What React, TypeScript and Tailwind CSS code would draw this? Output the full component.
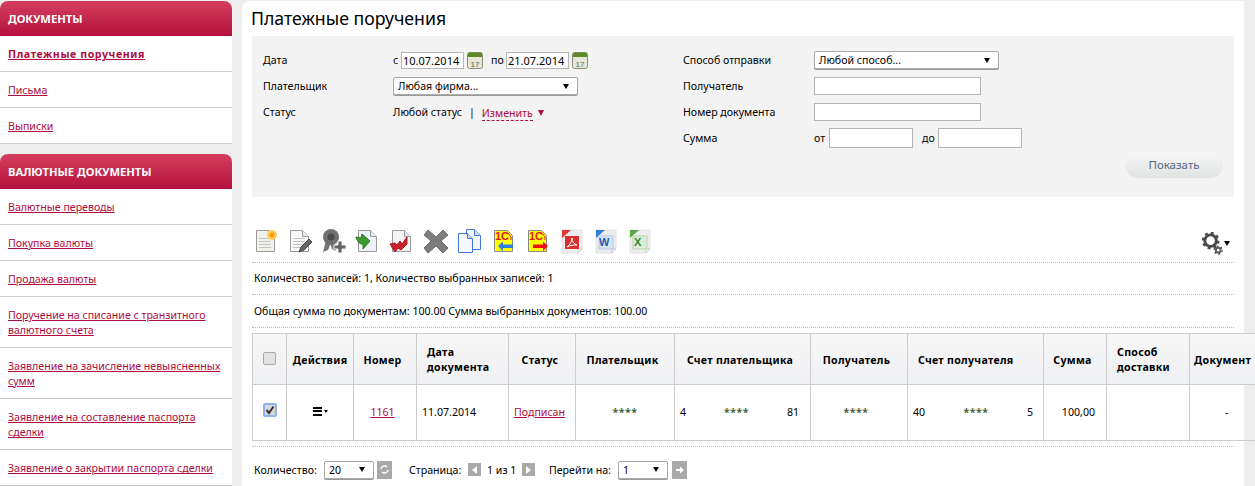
import React from 'react';

const FONT = "font-['Noto_Sans','Liberation_Sans',sans-serif]";

const Page: React.FC<{ fill?: string; stroke?: string; children?: React.ReactNode }> = ({
  fill = '#f7f8fb',
  stroke = '#9a9a9a',
  children,
}) => (
  <svg width="26" height="26" viewBox="0 0 26 26" className="block">
    <path d="M3.5 2.5h12l6 6v15h-18z" fill={fill} stroke={stroke} />
    <path d="M15.5 2.5v6h6" fill="#e4e8f0" stroke={stroke} />
    {children}
  </svg>
);

const TextLines = () => (
  <g stroke="#c4c4c4">
    <path d="M6 10.5h12M6 13.5h12M6 16.5h12M6 19.5h12" />
  </g>
);

const OneC: React.FC<{ arrow: 'left' | 'right' }> = ({ arrow }) => (
  <svg width="26" height="26" viewBox="0 0 26 26" className="block">
    <path d="M3.5 2.5h13l5 5v16h-18z" fill="#ffff00" stroke="#8a8a8a" />
    <text x="4" y="12" fontSize="11" fontWeight="700" fill="#e02020" fontFamily="Liberation Sans">
      1С
    </text>
    <path d="M15 5h2l3 4v3" stroke="#e02020" fill="none" />
    {arrow === 'left' ? (
      <path d="M7 18l5-4.500v3h10v3.500h-10v3z" fill="#2b7de0" />
    ) : (
      <path d="M23 18l-5-4.500v3h-10v3.500h10v3z" fill="#ee1111" />
    )}
  </svg>
);

const OfficeDoc: React.FC<{ corner: string; children: React.ReactNode }> = ({ corner, children }) => (
  <svg width="26" height="26" viewBox="0 0 26 26" className="block">
    <path d="M3 2h20v19l-4 4H3z" fill="#ededf0" stroke="#e2e2e2" />
    <path d="M23 21h-4v4z" fill="#ffffff" stroke="#cccccc" />
    <path d="M3 2h9L3 10z" fill={corner} />
    {children}
  </svg>
);

const toolbarIcons: React.ReactNode[] = [
  <Page key="new" fill="#f1f1ec">
    <TextLines />
    <circle cx="19" cy="7" r="5" fill="#ffcc55" />
    <circle cx="19" cy="7" r="2.500" fill="#f59a1c" />
  </Page>,
  <Page key="edit" fill="#f8f8f8">
    <TextLines />
    <path d="M12 24l2-5 8-8 3 3-8 8z" fill="#666666" stroke="#444444" />
  </Page>,
  <svg key="cert" width="26" height="26" viewBox="0 0 26 26" className="block">
    <path d="M5 12l-3 12 5-2 3-7zM13 13l2 10-4-2-2-6z" fill="#777777" />
    <circle cx="10" cy="9" r="8" fill="#707070" />
    <circle cx="10" cy="9" r="3.500" fill="#4c4c4c" />
    <path d="M17 13h4v4h4v4h-4v4h-4v-4h-4v-4h4z" fill="#666666" stroke="#f4f4f4" />
  </svg>,
  <Page key="in" fill="#eef2fa">
    <path d="M1 9l5 1 1-4 8 7-7 8v-5c-3 0-5-1-7-7z" fill="#3c9a2c" stroke="#2c7a1e" />
  </Page>,
  <Page key="out" fill="#f5f5f8">
    <path d="M1 16l5-1 2 2 3-4 2 3 5-7v7l-6 6-3-2-3 4z" fill="#c9202a" stroke="#a81820" />
  </Page>,
  <svg key="del" width="26" height="26" viewBox="0 0 26 26" className="block">
    <path
      d="M5 2l8 7 7-7 5 5-7 6 7 7-5 5-7-7-8 7-4-5 7-7-7-6z"
      fill="#7d7d7d"
      stroke="#6a6a6a"
    />
  </svg>,
  <svg key="copy" width="26" height="26" viewBox="0 0 26 26" className="block">
    <path d="M9.500 1.500h8l6 6v14h-14z" fill="#f2f5ff" stroke="#3f78e0" />
    <path d="M17.500 1.500v6h6" fill="#cfdcf8" stroke="#3f78e0" />
    <path d="M1.500 5.500h9l5 5v14h-14z" fill="#f7f9ff" stroke="#3f78e0" />
    <path d="M10.500 5.500v5h5" fill="#cfdcf8" stroke="#3f78e0" />
  </svg>,
  <OneC key="1c-in" arrow="left" />,
  <OneC key="1c-out" arrow="right" />,
  <OfficeDoc key="pdf" corner="#e03535">
    <rect x="6" y="8" width="14" height="13" fill="#d92f2f" />
    <path d="M8 19c3-2 5-6 5-9 0 4 2 6 5 7-3 0-7 0-10 2z" fill="none" stroke="#ffffff" />
  </OfficeDoc>,
  <OfficeDoc key="word" corner="#2f7fd6">
    <rect x="6" y="8" width="14" height="13" fill="#dbe6f5" stroke="#b4c8e4" />
    <text x="6" y="18" fontSize="11" fontWeight="700" fill="#1f57b0" fontFamily="Liberation Sans">
      W
    </text>
  </OfficeDoc>,
  <OfficeDoc key="excel" corner="#58a845">
    <rect x="6" y="8" width="14" height="13" fill="#dcebd6" stroke="#b7d3ac" />
    <text x="7" y="18" fontSize="11" fontWeight="700" fill="#2f8a3a" fontFamily="Liberation Sans">
      X
    </text>
  </OfficeDoc>,
];

const Calendar = () => (
  <svg width="16" height="17" viewBox="0 0 16 17" className="block">
    <rect x="0.500" y="0.500" width="15" height="16" rx="2" fill="#e6e7d6" stroke="#8a8f78" />
    <path d="M1 2.500a2 2 0 0 1 2-2h10a2 2 0 0 1 2 2V5H1z" fill="#5c8a28" />
    <text x="8" y="14.500" textAnchor="middle" fontSize="8" fill="#60645a" fontFamily="Liberation Sans">
      17
    </text>
  </svg>
);

const Gears = () => (
  <svg width="21" height="23" viewBox="0 0 22 24" className="block">
    <circle cx="9" cy="9" r="6" fill="none" stroke="#4a4a4a" strokeWidth="3" />
    <circle cx="9" cy="9" r="8" fill="none" stroke="#4a4a4a" strokeWidth="2.500" strokeDasharray="3 3.280" />
    <circle cx="17" cy="19" r="2.500" fill="none" stroke="#5a5a5a" strokeWidth="2" />
    <circle cx="17" cy="19" r="4.200" fill="none" stroke="#5a5a5a" strokeWidth="1.500" strokeDasharray="2 2.400" />
  </svg>
);

const Caret: React.FC<{ className?: string }> = ({ className = '' }) => (
  <span className={`inline-block w-0 h-0 border-x-[3.500px] border-x-transparent border-t-[5px] border-t-black ${className}`} />
);

const Select: React.FC<{ value: string; className: string }> = ({ value, className }) => (
  <div className={`flex items-center justify-between bg-white border border-[#aaaaaa] rounded-[2px] pl-1 pr-2 shadow-[0_1px_0_#999] ${className}`}>
    <span className="pt-[2px]">{value}</span>
    <Caret />
  </div>
);

const Box: React.FC<{ value?: string; className: string }> = ({ value = '', className }) => (
  <input
    readOnly
    value={value}
    className={`block bg-white border border-[#b5b5b5] px-px text-black text-[11px] leading-none outline-none ${className}`}
  />
);

const PagerBtn: React.FC<{ children: React.ReactNode; className?: string }> = ({ children, className = 'w-[14px] h-[14px]' }) => (
  <span className={`flex items-center justify-center bg-[#a9a9a9] text-white ${className}`}>{children}</span>
);

const Section: React.FC<{ title: string; items: string[]; active?: string }> = ({ title, items, active }) => (
  <section className="mb-[10px]">
    <h2 className="h-[35px] flex items-center px-2 pt-[2px] rounded-t-lg bg-gradient-to-b from-[#d53d5f] to-[#b30c3d] text-white font-bold text-[11.200px] uppercase">
      {title}
    </h2>
    <ul className="bg-white">
      {items.map((item) => (
        <li key={item} className="pl-2 pr-1 pt-[11px] pb-[9px] border-b border-[#cccccc] leading-[15px]">
          <a className={`text-[#b00b3c] underline ${item === active ? 'font-bold tracking-[0.6px]' : ''}`}>{item}</a>
        </li>
      ))}
    </ul>
  </section>
);

const FilterRow: React.FC<{ label: string; labelWidth: string; children: React.ReactNode }> = ({ label, labelWidth, children }) => (
  <div className="flex items-center h-[26px]">
    <span className={`${labelWidth} pt-[2px]`}>{label}</span>
    {children}
  </div>
);

const Stars = () => <span className="text-[#44663a] font-bold tracking-[0.5px]">****</span>;

const headers = [
  { title: 'Действия', w: 'w-[67px]', pad: 'text-center' },
  { title: 'Номер', w: 'w-[63px]', pad: 'text-center pr-[5px]' },
  { title: 'Дата документа', w: 'w-[92px]', pad: 'text-left pl-[10px]' },
  { title: 'Статус', w: 'w-[67px]', pad: 'text-center pr-[4px]' },
  { title: 'Плательщик', w: 'w-[99px]', pad: 'text-center pr-[5px]' },
  { title: 'Счет плательщика', w: 'w-[136px]', pad: 'text-center pr-[5px]' },
  { title: 'Получатель', w: 'w-[97px]', pad: 'text-center pr-[5px]' },
  { title: 'Счет получателя', w: 'w-[136px]', pad: 'text-left pl-[10px]' },
  { title: 'Сумма', w: 'w-[63px]', pad: 'text-center pr-[5px]' },
  { title: 'Способ доставки', w: 'w-[83px]', pad: 'text-left pl-[10px]' },
  { title: 'Документ', w: 'w-[70px]', pad: 'text-left pl-[4px]' },
];

export default function App() {
  return (
    <div className={`${FONT} w-[1255px] h-[486px] overflow-hidden bg-[#eeeeee] flex pt-px text-[10.600px] text-black`}>
      {/* Sidebar */}
      <aside className="w-[232px] shrink-0">
        <Section
          title="Документы"
          active="Платежные поручения"
          items={['Платежные поручения', 'Письма', 'Выписки']}
        />
        <Section
          title="Валютные документы"
          items={[
            'Валютные переводы',
            'Покупка валюты',
            'Продажа валюты',
            'Поручение на списание с транзитного валютного счета',
            'Заявление на зачисление невыясненных сумм',
            'Заявление на составление паспорта сделки',
            'Заявление о закрытии паспорта сделки',
          ]}
        />
      </aside>

      {/* Main */}
      <main className="ml-[10px] w-[1002px] shrink-0 bg-white rounded-tl-lg px-[10px]">
        <h1 className="h-[35px] flex items-center text-[17.700px] -ml-px">Платежные поручения</h1>

        <div className="bg-[#f3f3f3] h-[161px] pt-[11px] pl-[11px] pr-[11px] flex">
          <div className="w-[420px]">
            <FilterRow label="Дата" labelWidth="w-[130px]">
              <span className="w-[8px] pt-[2px]">с</span>
              <Box value="10.07.2014" className="w-[63px] h-[17px]" />
              <span className="ml-[3px]"><Calendar /></span>
              <span className="ml-[8px] w-[15px] pt-[2px]">по</span>
              <Box value="21.07.2014" className="w-[63px] h-[17px]" />
              <span className="ml-[3px]"><Calendar /></span>
            </FilterRow>
            <FilterRow label="Плательщик" labelWidth="w-[130px]">
              <Select value="Любая фирма..." className="w-[185px] h-[18px]" />
            </FilterRow>
            <FilterRow label="Статус" labelWidth="w-[130px]">
              <span className="pt-[2px]">Любой статус</span>
              <span className="mx-[7px] pt-[2px]">|</span>
              <span className="mt-[2px] text-[#b00b3c] border-b border-dashed border-[#b00b3c] leading-[14px]">Изменить</span>
              <span className="ml-[5px] mt-[2px] inline-block w-0 h-0 border-x-[3px] border-x-transparent border-t-[6px] border-t-[#b00b3c]" />
            </FilterRow>
          </div>

          <div className="flex-1 flex flex-col">
            <FilterRow label="Способ отправки" labelWidth="w-[131px]">
              <Select value="Любой способ..." className="w-[185px] h-[18px]" />
            </FilterRow>
            <FilterRow label="Получатель" labelWidth="w-[131px]">
              <Box className="w-[167px] h-[18px]" />
            </FilterRow>
            <FilterRow label="Номер документа" labelWidth="w-[131px]">
              <Box className="w-[167px] h-[18px]" />
            </FilterRow>
            <FilterRow label="Сумма" labelWidth="w-[131px]">
              <span className="w-[15px] pt-[2px]">от</span>
              <Box className="w-[84px] h-[20px]" />
              <span className="ml-[9px] w-[16px] pt-[2px]">до</span>
              <Box className="w-[84px] h-[20px]" />
            </FilterRow>
            <div className="flex justify-end mt-px">
              <button className="w-[98px] h-[26px] rounded-full bg-gradient-to-b from-[#f6f6f6] to-[#e2e4e4] text-[#4f6a85] text-[11.500px]">
                Показать
              </button>
            </div>
          </div>
        </div>

        {/* Toolbar */}
        <div className="mt-[31px] h-[35px] flex items-start justify-between border-b border-dotted border-[#bbbbbb] pl-[1px] pr-[4px]">
          <div className="flex gap-[8px]">
            {toolbarIcons.map((icon, i) => (
              <span key={i} className="block">{icon}</span>
            ))}
          </div>
          <div className="flex items-start mt-[4px]">
            <Gears />
            <Caret className="mt-[9px] ml-px" />
          </div>
        </div>
        <div className="h-[32px] flex items-center pl-[2px] border-b border-dotted border-[#bbbbbb]">
          Количество записей: 1, Количество выбранных записей: 1
        </div>
        <div className="h-[33px] flex items-center pl-[2px] pt-[2px] border-b border-dotted border-[#bbbbbb]">
          Общая сумма по документам: 100.00 Сумма выбранных документов: 100.00
        </div>

        {/* Table */}
        <table className="mt-[5px] w-[1007px] table-fixed border-collapse">
          <thead>
            <tr className="h-[51px] bg-gradient-to-b from-[#f7f7f8] to-[#eff0f2]">
              <th className="w-[34px] border border-[#cccccc] align-middle">
                <span className="block mx-auto mb-[2px] w-[13px] h-[13px] rounded-[2px] border border-[#a8a8a8] bg-[#e2e2e2]" />
              </th>
              {headers.map((h) => (
                <th
                  key={h.title}
                  className={`${h.w} ${h.pad} border border-[#cccccc] pt-[2px] font-bold leading-[15px] tracking-[0.3px]`}
                >
                  {h.title}
                </th>
              ))}
            </tr>
          </thead>
          <tbody>
            <tr className="h-[56px]">
              <td className="border border-[#cccccc] bg-white">
                <span className="mx-auto mb-[6px] flex items-center justify-center w-[14px] h-[14px] rounded-[2px] border-2 border-[#8db4f0] bg-[#d8d8d8]">
                  <svg width="10" height="10" viewBox="0 0 10 10"><path d="M1.500 5l2.500 3 4.500-6.500" fill="none" stroke="#333333" strokeWidth="2" /></svg>
                </span>
              </td>
              <td className="border border-[#cccccc] bg-white">
                <span className="flex items-center justify-center mb-[3px] gap-[2px]">
                  <span className="flex flex-col gap-[1.500px]">
                    <span className="block w-[9px] h-[2px] bg-black" />
                    <span className="block w-[9px] h-[2px] bg-black" />
                    <span className="block w-[9px] h-[2px] bg-black" />
                  </span>
                  <span className="w-0 h-0 border-x-[2.500px] border-x-transparent border-t-[3px] border-t-black" />
                </span>
              </td>
              <td className="border border-[#cccccc] bg-white text-center pr-[5px]">
                <a className="text-[#b00b3c] underline">1161</a>
              </td>
              <td className="border border-[#cccccc] bg-white pl-[5px]">11.07.2014</td>
              <td className="border border-[#cccccc] bg-white pl-[5px]">
                <a className="text-[#b00b3c] underline">Подписан</a>
              </td>
              <td className="border border-[#cccccc] bg-white text-center"><Stars /></td>
              <td className="border border-[#cccccc] bg-white px-[5px]">
                <span className="flex justify-between pr-[6px]">
                  <span>4</span>
                  <Stars />
                  <span>81</span>
                </span>
              </td>
              <td className="border border-[#cccccc] bg-white text-center pr-[6px]"><Stars /></td>
              <td className="border border-[#cccccc] bg-white px-[5px]">
                <span className="flex justify-between pr-[5px]">
                  <span>40</span>
                  <Stars />
                  <span>5</span>
                </span>
              </td>
              <td className="border border-[#cccccc] bg-white text-right pr-[11px]">100,00</td>
              <td className="border border-[#cccccc] bg-white" />
              <td className="border-y border-[#cccccc] text-left pl-[35px]">-</td>
            </tr>
          </tbody>
        </table>

        {/* Pagination */}
        <div className="mt-[5px] border-t border-dotted border-[#bbbbbb] h-[46px] flex items-center pl-[2px]">
          <span className="w-[70px] pt-[2px]">Количество:</span>
          <Select value="20" className="w-[50px] h-[18px]" />
          <PagerBtn className="ml-[3px] w-[15px] h-[18px]">
            <svg width="9" height="11" viewBox="0 0 9 11"><path d="M1 5a3.500 3.500 0 0 1 6-2M8 6a3.500 3.500 0 0 1-6 2" fill="none" stroke="#ffffff" strokeWidth="1.500" /></svg>
          </PagerBtn>
          <span className="ml-[17px] w-[59px] pt-[2px]">Страница:</span>
          <PagerBtn className="w-[13px] h-[13px]">
            <span className="w-0 h-0 border-y-[4px] border-y-transparent border-r-[5px] border-r-white" />
          </PagerBtn>
          <span className="ml-[6px] w-[35px] pt-[2px]">1 из 1</span>
          <PagerBtn className="w-[13px] h-[13px]">
            <span className="w-0 h-0 border-y-[4px] border-y-transparent border-l-[5px] border-l-white" />
          </PagerBtn>
          <span className="ml-[14px] w-[69px] pt-[2px]">Перейти на:</span>
          <Select value="1" className="w-[50px] h-[18px]" />
          <PagerBtn className="ml-[4px] w-[15px] h-[18px]">
            <svg width="10" height="10" viewBox="0 0 10 10"><path d="M1 4h4V1.500L9 5 5 8.500V6H1z" fill="#ffffff" /></svg>
          </PagerBtn>
        </div>
      </main>
    </div>
  );
}
